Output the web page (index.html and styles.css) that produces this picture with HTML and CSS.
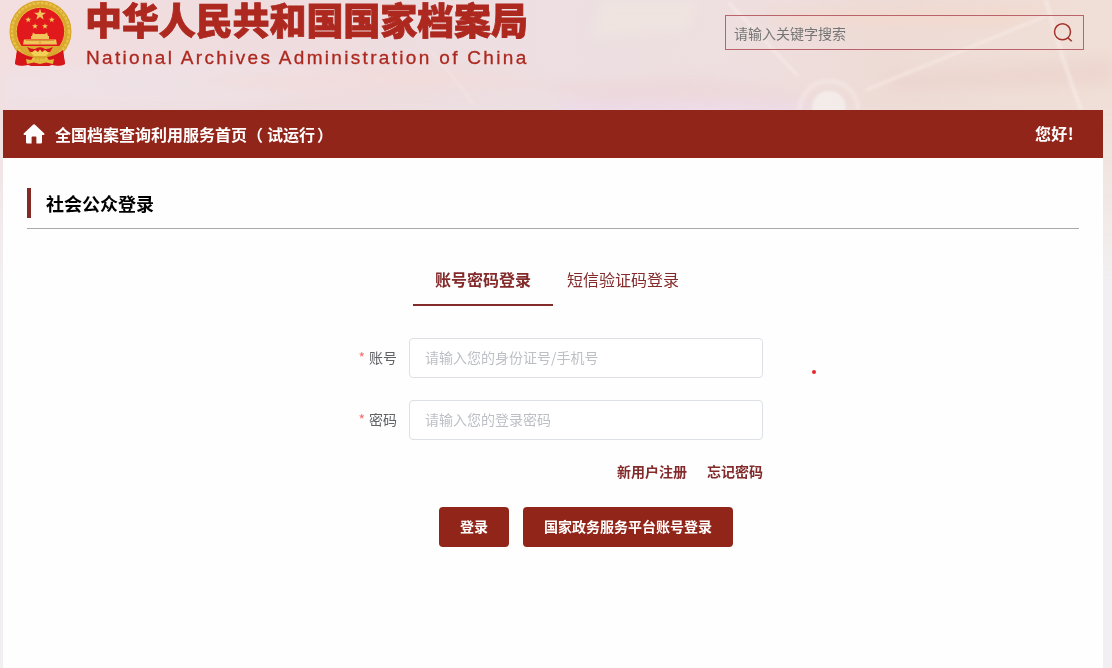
FILE: index.html
```
<!DOCTYPE html>
<html lang="zh-CN">
<head>
    <meta charset="UTF-8">
    <meta name="viewport" content="width=device-width, initial-scale=1.0">
    <title>全国档案查询利用服务</title>
    <link rel="stylesheet" href="styles.css">
</head>
<body>
    <svg class="banner" width="1112" height="280" viewBox="0 0 1112 280" aria-hidden="true">
        <defs>
            <linearGradient id="sky" x1="0" x2="1" y1="0" y2="0">
                <stop offset="0" stop-color="#f3dfe0"/>
                <stop offset="0.25" stop-color="#efdcde"/>
                <stop offset="0.5" stop-color="#eddfe2"/>
                <stop offset="0.65" stop-color="#eedfe0"/>
                <stop offset="0.8" stop-color="#eedbd6"/>
                <stop offset="1" stop-color="#f0dfd7"/>
            </linearGradient>
            <linearGradient id="fade" x1="0" x2="0" y1="0" y2="1">
                <stop offset="0.35" stop-color="#f1eff1" stop-opacity="0"/>
                <stop offset="1" stop-color="#f1eff1"/>
            </linearGradient>
            <filter id="soft" x="-20%" y="-100%" width="140%" height="300%">
                <feGaussianBlur stdDeviation="6"/>
            </filter>
            <filter id="line" x="-20%" y="-20%" width="140%" height="140%">
                <feGaussianBlur stdDeviation="1.4"/>
            </filter>
        </defs>
        <rect width="1112" height="280" fill="url(#sky)"/>
        <g filter="url(#soft)">
            <path d="M0 72 L240 54 L420 82 L240 106 L0 108Z" fill="#eee1e6" opacity="0.8"/>
            <path d="M180 80 L420 66 L560 84 L300 92Z" fill="#f3dbda" opacity="0.8"/>
            <path d="M530 84 L700 76 L820 98 L600 104Z" fill="#ecd6d9" opacity="0.6"/>
            <path d="M560 104 H810 V112 H560Z" fill="#eed8ec"/>
            <path d="M760 14 L1060 8 L1010 24 L800 24Z" fill="#f3d9cd"/>
            <path d="M880 76 L1112 58 V84 L900 90Z" fill="#ebd3cd" opacity="0.7"/>
            <path d="M600 0 H700 L690 30 L590 40Z" fill="#efe5df" opacity="0.7"/>
        </g>
        <g filter="url(#line)" fill="none" stroke="#f8ece8">
            <path d="M728 2 L798 76" stroke-width="3" opacity="0.7"/>
            <path d="M866 90 L1046 16" stroke-width="3" opacity="0.6"/>
            <path d="M1046 0 Q1062 60 1082 112" stroke-width="4" opacity="0.6"/>
            <path d="M430 50 Q460 84 474 106" stroke-width="2" opacity="0.5"/>
            <circle cx="829" cy="110" r="29" stroke-width="5" opacity="0.5"/>
            <circle cx="829" cy="108" r="17" fill="#f4ece9" stroke="none"/>
        </g>
        <rect width="1112" height="280" fill="url(#fade)"/>
    </svg>

    <div class="container">
        <header class="header">
            <div class="brand">
                <svg class="emblem" width="64" height="68" viewBox="0 0 64 68" aria-hidden="true">
                    <path d="M10 46 L7 64 Q12 67 18 64 L23 66 H41 L46 64 Q52 67 57 64 L54 46Z" fill="#d6161b"/>
                    <circle cx="32.5" cy="31.5" r="27.5" fill="#e2191c" stroke="#d9a72c" stroke-width="7"/>
                    <circle cx="32.5" cy="31.5" r="28.5" fill="none" stroke="#e6c24a" stroke-width="2.5" stroke-dasharray="3 1.2"/>
                    <circle cx="32.5" cy="31.5" r="24.2" fill="#e2191c" stroke="#e8bd3e" stroke-width="1"/>
                    <g fill="#f0c65a">
                        <path id="star" d="M32 8.5 L33.5 12.7 H38 L34.4 15.3 L35.7 19.5 L32 17 L28.3 19.5 L29.6 15.3 L26 12.7 H30.5Z"/>
                        <use href="#star" transform="translate(4.2 12.5) scale(0.5)"/>
                        <use href="#star" transform="translate(27.8 12.5) scale(0.5)"/>
                        <use href="#star" transform="translate(11 19) scale(0.5)"/>
                        <use href="#star" transform="translate(21 19) scale(0.5)"/>
                        <path d="M25 32.5 L27 34 H37 L39 32.5 L40 36 H24Z"/>
                        <path d="M23 36 H41 V39 H23Z"/>
                        <path d="M16 39.5 H48 L49 44.5 H15Z"/>
                    </g>
                    <path d="M32 45 V41 M18 40.5 H46" stroke="#d08c28" stroke-width="0.8"/>
                    <path d="M11 46 H53 Q46 56 32 57 Q18 56 11 46Z" fill="#dba92f"/>
                    <path d="M19 47 Q25 50 28 48.5 Q32 46 36 48.5 Q39 50 45 47 L42 52 H22Z" fill="#d6161b"/>
                    <path d="M23 53 L27 50 L30 52 L32 49.5 L34 52 L37 50 L41 53 L38 56 H26Z" fill="#f2cf55"/>
                    <path d="M9 50 Q17 56 25 57 L20 65 Q13 67 7 64Z M55 50 Q47 56 39 57 L44 65 Q51 67 57 64Z" fill="#d6161b"/>
                    <path d="M18 59 Q25 61 29 59 L32 61 L35 59 Q39 61 46 59 L45 64 L38 62.5 L32 64 L26 62.5 L19 64Z" fill="#e5b93c"/>
                </svg>
                <div class="brand-text">
                    <div class="brand-cn">中华人民共和国国家档案局</div>
                    <div class="brand-en">National Archives Administration of China</div>
                </div>
            </div>
            <div class="search">
                <input type="text" class="search-input" placeholder="请输入关键字搜索">
                <svg class="search-icon" width="20" height="20" viewBox="0 0 20 20" fill="none" stroke="#a33029" stroke-width="1.5">
                    <circle cx="9.5" cy="8.8" r="8"/>
                    <path d="M14.6 14.6 L18.8 18.2"/>
                </svg>
            </div>
        </header>

        <nav class="nav">
            <a class="nav-home">
                <svg class="home-icon" width="22" height="20" viewBox="0 0 22 20" fill="#fff">
                    <path d="M11 0.3 Q11.7 0.3 12.3 0.9 L21.3 9.6 Q22 10.8 20.6 11 H19 V18.2 Q19 19.5 17.7 19.5 H13.4 V13.3 Q13.4 12.6 12.7 12.6 H9.3 Q8.6 12.6 8.6 13.3 V19.5 H4.3 Q3 19.5 3 18.2 V11 H1.4 Q0 10.8 0.7 9.6 L9.7 0.9 Q10.3 0.3 11 0.3Z"/>
                </svg>
                <span>全国档案查询利用服务首页（<span class="trial">试运行</span>）</span>
            </a>
            <span class="nav-hello">您好!</span>
        </nav>

        <main class="content">
            <div class="title-row">
                <h1 class="title">社会公众登录</h1>
            </div>

            <div class="login">
                <div class="tabs">
                    <div class="tab active">账号密码登录</div>
                    <div class="tab">短信验证码登录</div>
                </div>

                <div class="form-item">
                    <label class="form-label" for="account">账号</label>
                    <input id="account" type="text" class="form-input" placeholder="请输入您的身份证号/手机号">
                </div>
                <div class="form-item">
                    <label class="form-label" for="password">密码</label>
                    <input id="password" type="password" class="form-input" placeholder="请输入您的登录密码">
                </div>

                <div class="links">
                    <a>新用户注册</a>
                    <a>忘记密码</a>
                </div>

                <div class="buttons">
                    <button class="button">登录</button>
                    <button class="button">国家政务服务平台账号登录</button>
                </div>
                <span class="dot"></span>
            </div>
        </main>
    </div>
</body>
</html>
```
FILE: styles.css
```
body {
    font-family: "Noto Sans CJK SC", sans-serif;
    background-color: #f1eff1;
    color: #333;
    margin: 0;
    height: 668px;
    overflow: hidden;
    position: relative;
}

.banner {
    position: absolute;
    top: 0;
    left: 0;
}

.container {
    position: relative;
    width: 1100px;
    height: 668px;
    margin-left: 3px;
    display: flex;
    flex-direction: column;
}

.header {
    height: 110px;
    display: flex;
    justify-content: space-between;
    align-items: flex-start;
    padding: 0 19px 0 5px;
    box-sizing: border-box;
}

.brand {
    display: flex;
    gap: 13px;
}

.emblem {
    display: block;
}

.brand-text {
    color: #ad281f;
    white-space: nowrap;
}

.brand-cn {
    font-size: 37px;
    font-weight: 900;
    line-height: 39px;
    letter-spacing: -0.1px;
    -webkit-text-stroke: 0.8px #ad281f;
}

.brand-en {
    font-family: "Liberation Sans", sans-serif;
    font-size: 19px;
    line-height: 22px;
    margin: 8px 0 0 1px;
    letter-spacing: 2.32px;
    -webkit-text-stroke: 0.3px #ad281f;
}

.search {
    width: 359px;
    height: 35px;
    margin-top: 15px;
    border: 1px solid #b9646a;
    box-sizing: border-box;
    display: flex;
    align-items: center;
    padding: 0 10px 0 8px;
}

.search-input {
    flex: 1;
    border: none;
    outline: none;
    padding: 0;
    background: transparent;
    font-family: inherit;
    font-size: 14px;
}

.search-input::placeholder {
    color: #757575;
}

.nav {
    height: 48px;
    background-color: #922519;
    color: #fff;
    font-size: 16px;
    font-weight: bold;
    display: flex;
    justify-content: space-between;
    align-items: center;
    padding: 0 29px 0 20px;
}

.nav-home {
    display: flex;
    align-items: center;
    gap: 10px;
}

.trial {
    margin: 0 2px 0 4px;
}

.nav-hello {
    padding-bottom: 2px;
    letter-spacing: 0.4px;
}

.content {
    flex: 1;
    background-color: #fefefe;
    padding: 30px 24px 0;
}

.title-row {
    padding-bottom: 10px;
    border-bottom: 1px solid #aaa;
}

.title {
    margin: 0;
    padding-left: 15px;
    border-left: 4px solid #832a24;
    color: #000;
    font-size: 18px;
    line-height: 30px;
}

.login {
    position: relative;
    width: 410px;
    margin: 27px 0 0 326px;
}

.tabs {
    display: flex;
    margin-left: 60px;
}

.tab {
    width: 140px;
    height: 50px;
    line-height: 47px;
    box-sizing: border-box;
    text-align: center;
    font-size: 16px;
    color: #832a2a;
    border-bottom: 2px solid transparent;
}

.tab.active {
    font-weight: bold;
    border-bottom-color: #832a2a;
}

.form-item {
    display: flex;
    align-items: center;
    margin-bottom: 22px;
}

.tabs + .form-item {
    margin-top: 32px;
}

.form-label {
    width: 56px;
    padding: 0 12px 2px 0;
    box-sizing: border-box;
    flex: none;
    display: flex;
    justify-content: flex-end;
    gap: 4px;
    font-size: 14px;
    color: #606266;
    white-space: nowrap;
}

.form-label::before {
    content: "*";
    color: #f56c6c;
}

.form-input {
    width: 354px;
    height: 40px;
    padding: 0 15px 2px;
    box-sizing: border-box;
    border: 1px solid #dcdfe6;
    border-radius: 4px;
    background-color: #fff;
    font-family: inherit;
    font-size: 14px;
    outline: none;
}

.form-input::placeholder {
    color: #bcbfc5;
}

.links {
    display: flex;
    justify-content: flex-end;
    gap: 20px;
    font-size: 14px;
    line-height: 18px;
    font-weight: bold;
    color: #832a2a;
}

.buttons {
    display: flex;
    gap: 14px;
    margin: 27px 0 0 86px;
}

.button {
    height: 40px;
    padding: 0 21px 2px;
    border: none;
    border-radius: 4px;
    background-color: #922519;
    color: #fff;
    font-family: inherit;
    font-size: 14px;
    font-weight: bold;
    white-space: nowrap;
    cursor: pointer;
}

.dot {
    position: absolute;
    left: 459px;
    top: 114px;
    width: 4px;
    height: 4px;
    border-radius: 50%;
    background-color: #e8262b;
}
```
